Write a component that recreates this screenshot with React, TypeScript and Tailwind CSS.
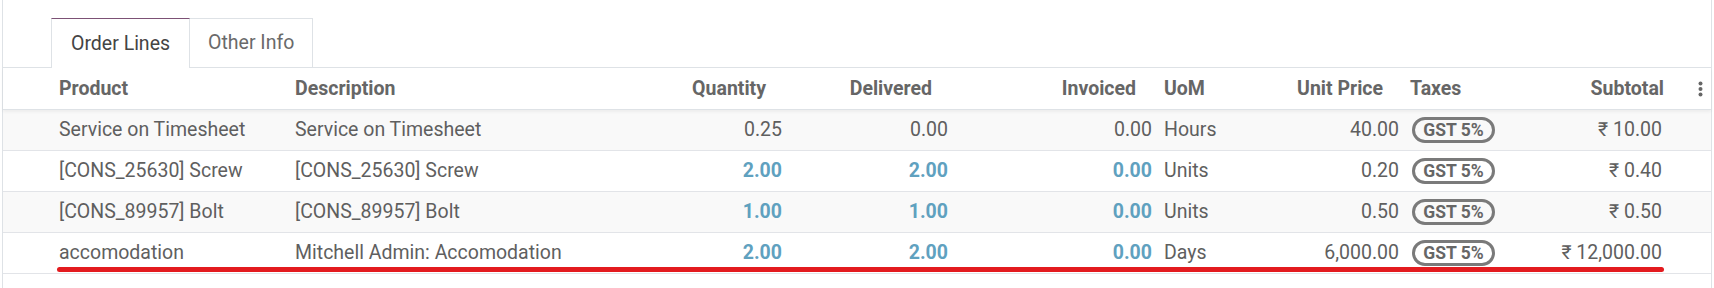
const cols = "grid grid-cols-[284px_313px_190px_166px_204px_100px_145px_115px_152px_39px]"

type Line = {
  product: string
  description: string
  qty: string
  delivered: string
  invoiced: string
  uom: string
  price: string
  subtotal: string
  info: boolean
}

const lines: Line[] = [
  { product: "Service on Timesheet", description: "Service on Timesheet", qty: "0.25", delivered: "0.00", invoiced: "0.00", uom: "Hours", price: "40.00", subtotal: "₹ 10.00", info: false },
  { product: "[CONS_25630] Screw", description: "[CONS_25630] Screw", qty: "2.00", delivered: "2.00", invoiced: "0.00", uom: "Units", price: "0.20", subtotal: "₹ 0.40", info: true },
  { product: "[CONS_89957] Bolt", description: "[CONS_89957] Bolt", qty: "1.00", delivered: "1.00", invoiced: "0.00", uom: "Units", price: "0.50", subtotal: "₹ 0.50", info: true },
  { product: "accomodation", description: "Mitchell Admin: Accomodation", qty: "2.00", delivered: "2.00", invoiced: "0.00", uom: "Days", price: "6,000.00", subtotal: "₹ 12,000.00", info: true },
]

function Num({ value, info }: { value: string; info: boolean }) {
  return (
    <span className={info ? "font-bold text-[#5fa1bf]" : "text-[#5f5f5f]"}>{value}</span>
  )
}

function TaxBadge() {
  return (
    <span className="inline-flex h-[26px] w-[83px] items-center justify-center rounded-full border-[3px] border-[#7a7a7a] text-[17.5px] font-bold text-[#666]">
      GST 5%
    </span>
  )
}

export default function App() {
  return (
    <div className="relative h-[288px] w-[1714px] overflow-hidden bg-white font-['Roboto','Noto_Sans',sans-serif] text-[19.5px]">
      <div className="ml-[2px] h-full w-[1710px] border-x border-[#dee2e6]">
        {/* notebook tabs */}
        <div className="flex border-b border-[#dee2e6] pl-[48px] pt-[18px]">
          <div className="-mb-px flex h-[50px] items-center border-x border-t border-x-[#dee2e6] border-t-[#7c5175] bg-white px-[19px] text-[#444]">
            Order Lines
          </div>
          <div className="flex h-[49px] items-center border-r border-t border-[#dee2e6] px-[18px] text-[#6a6a6a]">
            Other Info
          </div>
        </div>

        {/* list header */}
        <div className={`${cols} relative z-10 h-[42px] items-center border-b border-[#dee2e6] bg-white font-bold text-[#666] shadow-[0_2px_3px_rgba(0,0,0,0.05)]`}>
          <div className="pl-[56px]">Product</div>
          <div className="pl-[8px]">Description</div>
          <div className="pr-[24px] text-right">Quantity</div>
          <div className="pr-[24px] text-right">Delivered</div>
          <div className="pr-[24px] text-right">Invoiced</div>
          <div className="pl-[4px]">UoM</div>
          <div className="pr-[22px] text-right">Unit Price</div>
          <div className="pl-[5px]">Taxes</div>
          <div className="pr-[8px] text-right">Subtotal</div>
          <div className="flex pl-[26px]">
            <svg width="5" height="16" viewBox="0 0 5 16" fill="#666">
              <circle cx="2.5" cy="2.5" r="2" />
              <circle cx="2.5" cy="8" r="2" />
              <circle cx="2.5" cy="13.5" r="2" />
            </svg>
          </div>
        </div>

        {/* rows */}
        {lines.map((l, i) => (
          <div
            key={i}
            className={`${cols} h-[41px] items-center border-b border-[#e2e4e8] text-[#5f5f5f] ${i % 2 === 0 ? "bg-[#f9f9f9]" : "bg-white"}`}
          >
            <div className="truncate pl-[56px]">{l.product}</div>
            <div className="truncate pl-[8px]">{l.description}</div>
            <div className="pr-[8px] text-right"><Num value={l.qty} info={l.info} /></div>
            <div className="pr-[8px] text-right"><Num value={l.delivered} info={l.info} /></div>
            <div className="pr-[8px] text-right"><Num value={l.invoiced} info={l.info} /></div>
            <div className="pl-[4px]">{l.uom}</div>
            <div className="pr-[6px] text-right">{l.price}</div>
            <div className="flex pl-[7px]"><TaxBadge /></div>
            <div className="pr-[10px] text-right">{l.subtotal}</div>
            <div />
          </div>
        ))}
      </div>

      {/* hand-drawn red underline over the last line */}
      <div className="absolute left-[57px] top-[267px] h-[5px] w-[1607px] rounded-full bg-[#e31b1f]" />
    </div>
  )
}
